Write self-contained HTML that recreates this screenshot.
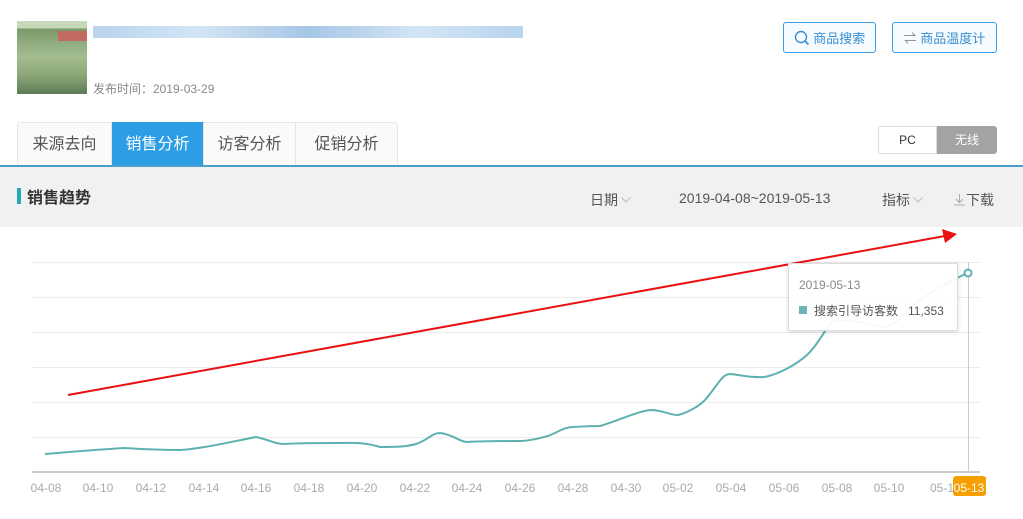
<!DOCTYPE html><html><head><meta charset="utf-8"><style>
body{margin:0;width:1023px;height:519px;background:#fff;font-family:"Liberation Sans","Noto Sans CJK SC",sans-serif;position:relative;overflow:hidden}
.a{position:absolute}
.btn{position:absolute;top:22px;height:31px;border:1px solid #3a9ee0;border-radius:3px;background:#f6fbff;color:#3a8fd0;font-size:13px;line-height:31px;box-sizing:border-box;text-align:center}
.tab{position:absolute;top:122px;height:44px;line-height:44px;font-size:16px;color:#555;text-align:center;width:92px;border-right:1px solid #e6e6e6;border-top:1px solid #e6e6e6;background:#fafafa;box-sizing:border-box}
.chev{display:inline-block;vertical-align:2px;margin-left:3px}
</style></head><body>
<div class="a" style="left:17px;top:21px;width:70px;height:73px;background:linear-gradient(180deg,#c5d8b8 0,#c5d8b8 10%,#7b9868 10%,#90ac80 30%,#a3bd90 50%,#8aa676 75%,#5e7a55 100%)"></div>
<div class="a" style="left:58px;top:31px;width:29px;height:10px;background:#c06a60"></div>
<div class="a" style="left:93px;top:26px;width:430px;height:12px;background:linear-gradient(90deg,#a6c8ea,#c9dff2,#8fb7e0,#c9dff2,#a6c8ea);opacity:.8"></div>
<div class="a" style="left:93px;top:80px;font-size:12px;color:#888">发布时间：2019-03-29</div>
<div class="btn" style="left:783px;width:93px"><svg width="16" height="16" style="vertical-align:-3px" viewBox="0 0 16 16"><circle cx="7" cy="7" r="5.5" fill="none" stroke="#3a8fd0" stroke-width="1.4"/><path d="M11 11l3.5 3.5" stroke="#3a8fd0" stroke-width="1.6"/></svg> 商品搜索</div>
<div class="btn" style="left:892px;width:105px"><span style="color:#888">⇌</span> 商品温度计</div>
<div class="tab" style="left:17px;width:95px;border-left:1px solid #e6e6e6;border-radius:3px 0 0 0">来源去向</div>
<div class="tab" style="left:112px;background:#2d9ee6;color:#fff;border-top-color:#2d9ee6">销售分析</div>
<div class="tab" style="left:204px">访客分析</div>
<div class="tab" style="left:296px;width:102px;border-radius:0 3px 0 0">促销分析</div>
<div class="a" style="left:878px;top:126px;width:59px;height:28px;border:1px solid #ddd;border-radius:3px 0 0 3px;box-sizing:border-box;font-size:12px;line-height:26px;text-align:center;color:#333">PC</div>
<div class="a" style="left:937px;top:126px;width:60px;height:28px;background:#a3a3a3;border-radius:0 3px 3px 0;font-size:12px;line-height:28px;text-align:center;color:#fff">无线</div>
<div class="a" style="left:0;top:165px;width:1023px;height:2px;background:#4b9ec8"></div>
<div class="a" style="left:0;top:167px;width:1023px;height:60px;background:#f1f1f1"></div>
<div class="a" style="left:17px;top:188px;width:4px;height:16px;background:#25aab5"></div>
<div class="a" style="left:27px;top:184px;font-size:16px;font-weight:bold;color:#333">销售趋势</div>
<div class="a" style="left:590px;top:190px;font-size:14px;color:#555">日期<svg class="chev" width="10" height="6"><path d="M0.5 0.5L5 5L9.5 0.5" fill="none" stroke="#bbb"/></svg></div>
<div class="a" style="left:679px;top:190px;font-size:14px;color:#555">2019-04-08~2019-05-13</div>
<div class="a" style="left:882px;top:190px;font-size:14px;color:#555">指标<svg class="chev" width="10" height="6"><path d="M0.5 0.5L5 5L9.5 0.5" fill="none" stroke="#bbb"/></svg></div>
<div class="a" style="left:953px;top:190px;font-size:14px;color:#555"><svg width="13" height="13" style="vertical-align:-1px" viewBox="0 0 13 13"><path d="M6.5 1V9M3 6l3.5 3.5L10 6M1 12H12" fill="none" stroke="#aaa"/></svg>下载</div>
<svg class="a" style="left:0;top:0" width="1023" height="519">
<g stroke="#ececec" stroke-width="1"><line x1="32" x2="980" y1="262.5" y2="262.5"/><line x1="32" x2="980" y1="297.5" y2="297.5"/><line x1="32" x2="980" y1="332.5" y2="332.5"/><line x1="32" x2="980" y1="367.5" y2="367.5"/><line x1="32" x2="980" y1="402.5" y2="402.5"/><line x1="32" x2="980" y1="437.5" y2="437.5"/></g>
<line x1="32" x2="980" y1="472" y2="472" stroke="#ccc" stroke-width="2"/>
<line x1="968.5" x2="968.5" y1="262" y2="472" stroke="#ccc"/>
<path d="M45,454 C70,452 90,450 125,448 C140,449 160,450 180,450 C200,449 230,442 256,437 C270,440 275,444 283,444 C300,443 320,443 337,443 C355,443 364,442 380,447 C395,447 405,447 416,444 C428,440 432,433 440,433 C452,434 460,442 467,442 C480,441 505,441 522,441 C535,440 540,438 548,436 C560,431 565,427 573,427 C590,426 595,426 600,426 C615,422 640,410 652,410 C665,411 670,415 678,415 C690,412 700,405 705,400 C718,385 722,374 730,374 C742,375 750,378 765,377 C778,374 795,366 808,354 C822,340 828,322 835,320 C845,320 855,322 860,322 C870,324 878,327 886,327 C898,323 905,312 913,305 C925,297 933,290 940,287 C950,282 960,276 968,273" fill="none" stroke="#5fb1b0" stroke-width="2"/>
<circle cx="968" cy="273" r="3.5" fill="#fff" stroke="#5fb1b0" stroke-width="2"/>
<line x1="68" y1="395" x2="945" y2="236" stroke="#e81010" stroke-width="2"/>
<path d="M957,234 L942,229 L945,243 Z" fill="#e81010"/>
<g font-size="12" fill="#aaa" text-anchor="middle" font-family="Liberation Sans,sans-serif">
<text x="46" y="492">04-08</text><text x="98" y="492">04-10</text><text x="151" y="492">04-12</text><text x="204" y="492">04-14</text><text x="256" y="492">04-16</text><text x="309" y="492">04-18</text><text x="362" y="492">04-20</text><text x="415" y="492">04-22</text><text x="467" y="492">04-24</text><text x="520" y="492">04-26</text><text x="573" y="492">04-28</text><text x="626" y="492">04-30</text><text x="678" y="492">05-02</text><text x="731" y="492">05-04</text><text x="784" y="492">05-06</text><text x="837" y="492">05-08</text><text x="889" y="492">05-10</text><text x="942" y="492">05-1</text></g>
<rect x="953" y="476" width="33" height="20" rx="3" fill="#f5a000"/>
<text x="969" y="492" font-size="12" fill="#fff" text-anchor="middle" font-family="Liberation Sans,sans-serif">05-13</text>
</svg>
<div class="a" style="left:788px;top:263px;width:170px;height:68px;background:rgba(255,255,255,.93);border:1px solid #ddd;box-shadow:0 1px 4px rgba(0,0,0,.15);box-sizing:border-box"></div>
<div class="a" style="left:799px;top:278px;font-size:12px;color:#888">2019-05-13</div>
<div class="a" style="left:799px;top:306px;width:8px;height:8px;background:#6db5b5"></div>
<div class="a" style="left:814px;top:302px;font-size:12px;color:#555">搜索引导访客数 &nbsp;&nbsp;11,353</div>
</body></html>
